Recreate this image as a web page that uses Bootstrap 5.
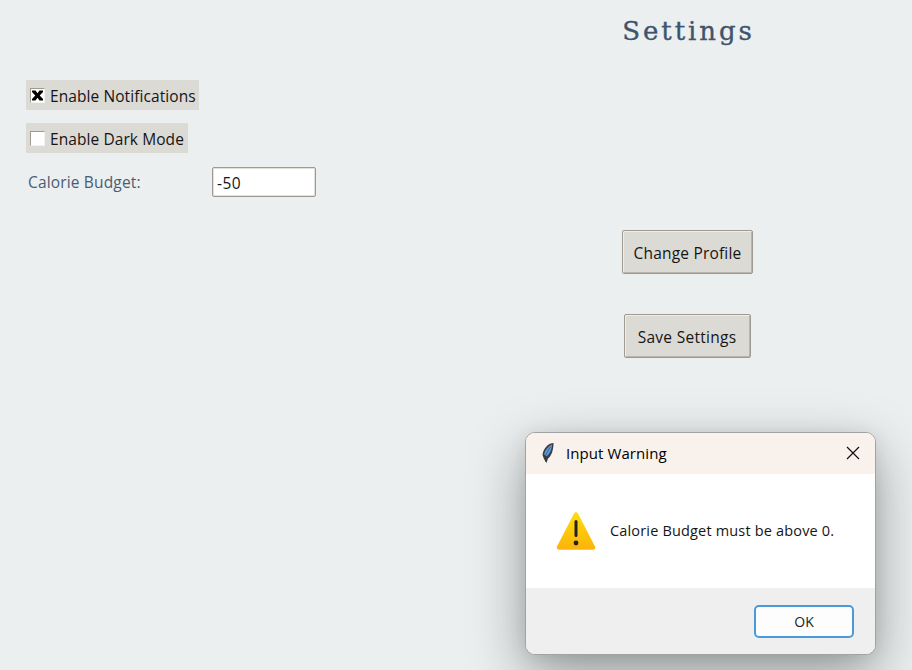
<!DOCTYPE html>
<html lang="en">
<head>
<meta charset="utf-8">
<meta name="viewport" content="width=device-width, initial-scale=1">
<title>Settings</title>
<link href="https://cdn.jsdelivr.net/npm/bootstrap@5.3.0/dist/css/bootstrap.min.css" rel="stylesheet">
<style>
body{background:#ebeff0;font-family:"Open Sans","Noto Sans",sans-serif;font-size:15.5px;line-height:20px;color:#151515;height:670px}
.settings-page{padding:16px 0 0 26px}
.centre-column{margin-left:437px}
.page-title{font:400 26px/30px "DejaVu Serif",serif;color:#3e546d;-webkit-text-stroke:.35px #3e546d;letter-spacing:2.9px;margin-top:0;margin-bottom:34px;padding-left:2px}
.option{background:#dcdad5;height:30px;padding:1px 3px 0 4px;margin-bottom:13px}
.option-box{width:15px;height:15px;background:#fff;border:1px solid #f3f2ef;border-top-color:#9e9a91;border-left-color:#9e9a91;margin-right:5px;flex:none}
.option-text{width:146px;white-space:nowrap;letter-spacing:.08px}
.option-text.dark{width:135px}
.budget-row{margin-top:1px}
.budget-label{width:186px;padding:0 0 0 2px;color:#4a5c70;letter-spacing:.16px}
.budget-input{width:104px;height:30px;border:1px solid #9e9a91;border-radius:2px;box-shadow:inset 0 0 0 1px #e3e0da;padding:1px 4px 0;color:#151515;letter-spacing:.5px}
.centre-actions{margin-top:33px}
.tk-btn{background:#dcdad5;border:1px solid #9e9a91;border-radius:2px;box-shadow:inset 1px 1px 0 #f0eeea,inset -1px -1px 0 #bab5ab;color:#151515;font-size:15.5px;letter-spacing:.18px;line-height:20px;padding:2px 0 0;height:44px;width:131px;white-space:nowrap}
.tk-btn.save{width:127px;margin-top:40px;margin-right:1px;letter-spacing:.28px}
.dialog-window{left:525px;top:432px;width:351px;height:223px;border:1px solid #a0a3a3;border-radius:10px;box-shadow:0 20px 56px rgba(0,0,0,.36),0 2px 18px rgba(0,0,0,.08);background:#fff}
.dialog-title{height:41px;background:#f9f1eb;padding:0 15px 1px 14px;color:#000;font-size:15px}
.title-text{margin-left:10px;letter-spacing:.08px}
.dialog-body{height:114px;padding-left:30px;font-size:14.5px}
.message{margin-left:14px;letter-spacing:.17px}
.dialog-foot{background:#efefef;padding-right:21px}
.ok-btn{width:100px;height:33px;border:2px solid #4a9ada;border-radius:5px;background:#fdfdfd;padding:2px 0 0;font-size:14px;line-height:20px;color:#222}
</style>
</head>
<body class="position-relative overflow-hidden">
<main class="settings-page">
  <h1 class="page-title centre-column text-center">Settings</h1>
  <div class="d-flex flex-column align-items-start">
    <label class="option d-flex align-items-center">
      <span class="option-box d-flex align-items-center justify-content-center"><svg width="11" height="11" viewBox="0 0 11 11"><path d="M0 .5H3.500L5.500 3.200L7.500 .5H11V2L7.700 5.500L11 9V10.500H7.500L5.500 7.800L3.500 10.500H0V9L3.300 5.500L0 2Z" fill="#000"/></svg></span>
      <span class="option-text">Enable Notifications</span>
    </label>
    <label class="option d-flex align-items-center">
      <span class="option-box"></span>
      <span class="option-text dark">Enable Dark Mode</span>
    </label>
  </div>
  <div class="budget-row d-flex align-items-center">
    <label class="budget-label" for="budget">Calorie Budget:</label>
    <input id="budget" class="budget-input" type="text" value="-50">
  </div>
  <div class="centre-column centre-actions d-flex flex-column align-items-center">
    <button class="btn tk-btn" type="button">Change Profile</button>
    <button class="btn tk-btn save" type="button">Save Settings</button>
  </div>
</main>
<section class="dialog-window position-absolute overflow-hidden d-flex flex-column" role="dialog">
  <header class="dialog-title d-flex align-items-center">
    <svg width="16" height="22" viewBox="0 0 16 22"><path d="M13.500 1C9 1 3.500 5.500 2.500 13L4 17L6.500 21L8 16.500C11.500 14 13.500 8 13.500 1Z" fill="#3b3d40"/><path d="M12 2.500C8.500 4 5 8 4.200 12.500L6.500 14.500C10 11.500 12 7 12 2.500Z" fill="#5a9ee8"/><path d="M10.500 4.500L6 12.500L5.700 20" fill="none" stroke="#263548" stroke-width=".6"/></svg>
    <span class="title-text">Input Warning</span>
    <svg class="ms-auto" width="14" height="14" viewBox="0 0 14 14"><path d="M1 1L13 13M13 1L1 13" stroke="#111" stroke-width="1.200" fill="none"/></svg>
  </header>
  <div class="dialog-body d-flex align-items-center">
    <svg width="40" height="40" viewBox="0 0 40 40"><defs><linearGradient id="amber" x2="0" y2="1"><stop stop-color="#ffdb0b"/><stop offset="1" stop-color="#fdb50b"/></linearGradient></defs><path d="M20 3.500L37 36.500H3Z" fill="url(#amber)" stroke="url(#amber)" stroke-width="4.500" stroke-linejoin="round"/><path d="M20 10.500V24.500" stroke="#222" stroke-width="3" stroke-linecap="round"/><circle cx="20" cy="32" r="2.400" fill="#222"/></svg>
    <span class="message">Calorie Budget must be above 0.</span>
  </div>
  <footer class="dialog-foot flex-grow-1 d-flex align-items-center justify-content-end">
    <button class="btn ok-btn" type="button">OK</button>
  </footer>
</section>
<script src="https://cdn.jsdelivr.net/npm/bootstrap@5.3.0/dist/js/bootstrap.bundle.min.js"></script>
</body>
</html>
